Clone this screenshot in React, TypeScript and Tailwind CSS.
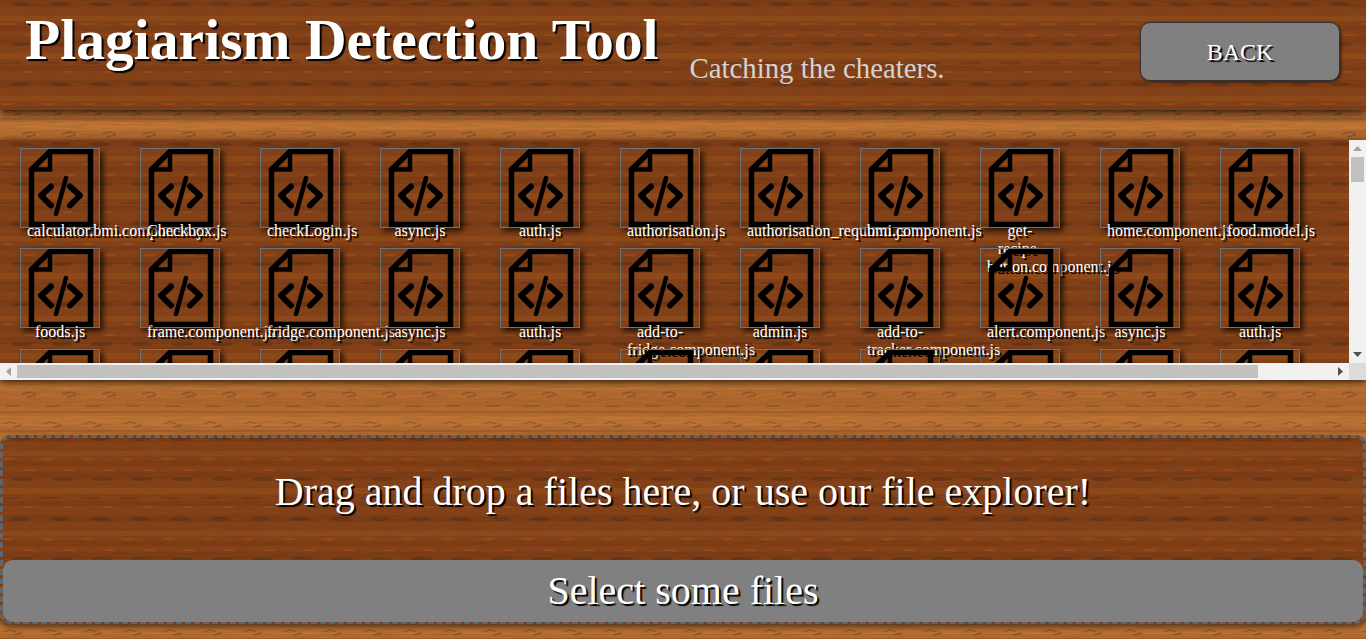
import React from "react";

const rowOne = ["calculator.bmi.component.js","Checkbox.js","checkLogin.js","async.js","auth.js","authorisation.js","authorisation_required.js","bmi.component.js","get-recipe-button.component.js","home.component.js","food.model.js"];
const rowTwo = ["foods.js","frame.component.js","fridge.component.js","async.js","auth.js","add-to-fridge.component.js","admin.js","add-to-tracker.component.js","alert.component.js","async.js","auth.js"];
const rowThree = ["", "", "", "", "", "", "", "", "", "", ""];

function Wood({ id, tone }: { id: string; tone: "dark" | "light" }) {
  const dark = tone === "dark";
  const xs = [0, 40, 80];
  return (
    <svg aria-hidden="true" className="absolute inset-0 h-full w-full">
      <defs>
        {dark ? (
          <pattern id={id} width="120" height="80" patternUnits="userSpaceOnUse">
            <rect width="120" height="80" fill="#833f17" />
            <rect y="0" width="120" height="7" fill="#7a3a15" />
            <rect y="16" width="120" height="5" fill="#8d4718" />
            <rect y="26" width="120" height="5" fill="#7b3a15" />
            <rect y="37" width="120" height="7" fill="#7a3a15" />
            <rect y="53" width="120" height="6" fill="#8f4818" />
            <rect y="66" width="120" height="5" fill="#7b3a15" />
            {xs.map((x) => (
              <g key={x}>
                <ellipse cx={x + 20} cy="4" rx="11" ry="2" fill="#4d2a14" opacity="0.5" />
                <ellipse cx={x + 8} cy="24" rx="7" ry="0.8" fill="#b9591a" opacity="0.55" />
                <ellipse cx={x + 22} cy="44" rx="11" ry="2" fill="#4d2a14" opacity="0.5" />
                <ellipse cx={x + 30} cy="35" rx="6" ry="0.8" fill="#b9591a" opacity="0.55" />
                <ellipse cx={x + 10} cy="63" rx="10" ry="1.3" fill="#5a2d12" opacity="0.45" />
                <ellipse cx={x + 28} cy="72" rx="6" ry="0.8" fill="#b9591a" opacity="0.5" />
              </g>
            ))}
          </pattern>
        ) : (
          <pattern id={id} width="120" height="52" patternUnits="userSpaceOnUse">
            <rect width="120" height="52" fill="#b66b30" />
            <rect y="0" width="120" height="10" fill="#bf7435" />
            <rect y="14" width="120" height="2" fill="#a0602c" />
            <rect y="18" width="120" height="8" fill="#c17636" />
            <rect y="34" width="120" height="9" fill="#b0662d" />
            <rect y="47" width="120" height="2" fill="#a0602c" />
            {xs.map((x) => (
              <g key={x} fill="none" stroke="#7a4a24" strokeWidth="1.3" opacity="0.7">
                <path d={`M${x + 3} 8 l7 -2 l7 2 M${x + 14} 11 l8 -2`} />
                <path d={`M${x + 22} 30 l8 -2 l6 2 M${x + 27} 33 l9 -2`} />
                <path d={`M${x + 6} 42 h14`} />
              </g>
            ))}
          </pattern>
        )}
        <filter id={`${id}-grain`} x="0" y="0" width="100%" height="100%">
          <feTurbulence type="fractalNoise" baseFrequency="0.035 0.5" numOctaves="3" seed="7" />
          <feColorMatrix values="0 0 0 0 0.22  0 0 0 0 0.09  0 0 0 0 0.02  1.8 0 0 0 -0.62" />
        </filter>
      </defs>
      <rect width="100%" height="100%" fill={`url(#${id})`} />
      <rect width="100%" height="100%" filter={`url(#${id}-grain)`} opacity="0.35" />
    </svg>
  );
}

function FileIcon() {
  return (
    <svg
      viewBox="0 0 78 78"
      className="relative block h-20 w-20 border border-[#6a7378] [box-shadow:3px_3px_6px_rgba(0,0,0,0.75)]"
      fill="none"
      stroke="#000"
    >
      <path d="M10.5 75.5 H69.5 V2.5 H29 L10.5 20.5 Z" strokeWidth="5.5" />
      <path d="M29 2.5 V20.5 H10.5" strokeWidth="4.5" />
      <path d="M30 37.5 L20 46.5 L30 56.5 M49 37.5 L59 46.5 L49 56.5" strokeWidth="6" strokeLinecap="round" strokeLinejoin="round" />
      <path d="M45 29 L35 65" strokeWidth="4.5" strokeLinecap="round" />
    </svg>
  );
}

function FileItem({ name }: { name: string }) {
  return (
    <div className="h-[100.5px] w-[120px] shrink-0 px-5">
      <FileIcon />
      <div className="relative mx-[7px] -mt-[5.9px] w-[66px] text-center text-[16px] leading-[18px] text-white [text-shadow:2px_2px_0_#000]">
        {name}
      </div>
    </div>
  );
}

function Arrow({ dir, dim }: { dir: "up" | "down" | "left" | "right"; dim?: boolean }) {
  const d = { up: "M4.5 2 L9 7 H0 Z", down: "M0 2 H9 L4.5 7 Z", left: "M7 0 V9 L2 4.5 Z", right: "M2 0 L7 4.5 L2 9 Z" }[dir];
  return (
    <svg viewBox="0 0 9 9" className="h-[9px] w-[9px]" fill={dim ? "#a3a3a3" : "#505050"}>
      <path d={d} />
    </svg>
  );
}

export default function App() {
  return (
    <div className="relative h-[639px] w-[1366px] overflow-hidden font-['Liberation_Serif',serif]">
      <Wood id="page-wood" tone="light" />

      <header className="relative flex h-[110px] items-start [box-shadow:0_3px_9px_rgba(0,0,0,0.8)]">
        <Wood id="header-wood" tone="dark" />
        <h1 className="relative ml-[25px] mt-[7px] whitespace-nowrap text-[57.6px] font-bold leading-[66px] text-white [text-shadow:2px_2px_1px_#000]">
          Plagiarism Detection Tool
        </h1>
        <p className="relative ml-[31px] mt-[52px] whitespace-nowrap text-[28.8px] leading-[33px] text-[#d3d3d3]">
          Catching the cheaters.
        </p>
        <button className="relative ml-auto mr-[26px] mt-[22px] h-[59px] w-[200px] rounded-[10px] border border-[#333] bg-[#808080] text-[24px] text-white [box-shadow:1px_1px_3px_rgba(0,0,0,0.6)] [text-shadow:2px_2px_1px_#000]">
          BACK
        </button>
      </header>

      <section className="relative mt-[30px] flex h-[240px] flex-col [box-shadow:0_2px_8px_rgba(0,0,0,0.75)]">
        <div className="flex h-[223px]">
          <div className="relative h-[223px] w-[1349px] overflow-hidden">
            <Wood id="files-wood" tone="dark" />
            <div className="relative flex w-[1320px] flex-wrap pt-[7.9px]">
              {[...rowOne, ...rowTwo, ...rowThree].map((name, i) => (
                <FileItem key={i} name={name} />
              ))}
            </div>
          </div>
          <div className="flex w-[17px] flex-col items-center bg-[#f1f1f1]">
            <div className="flex h-[17px] items-center justify-center"><Arrow dir="up" dim /></div>
            <div className="h-[25px] w-[13px] bg-[#c1c1c1]" />
            <div className="flex-1" />
            <div className="flex h-[17px] items-center justify-center"><Arrow dir="down" /></div>
          </div>
        </div>
        <div className="flex h-[17px]">
          <div className="flex w-[1349px] items-center bg-[#f1f1f1]">
            <div className="flex w-[17px] items-center justify-center"><Arrow dir="left" dim /></div>
            <div className="h-[13px] w-[1241px] bg-[#c1c1c1]" />
            <div className="flex-1" />
            <div className="flex w-[17px] items-center justify-center"><Arrow dir="right" /></div>
          </div>
          <div className="w-[17px] bg-[#dcdcdc]" />
        </div>
      </section>

      <section className="relative mt-[55px] flex h-[189px] flex-col overflow-hidden rounded-[10px] px-[3px] pb-[2px] pt-[3px] [box-shadow:0_3px_6px_rgba(0,0,0,0.55)]">
        <Wood id="drop-wood" tone="dark" />
        <div className="absolute inset-0 rounded-[10px] border-[3px] border-dashed border-[#5f666b]" />
        <p className="relative mt-[31px] text-center text-[40px] leading-[46px] text-white [text-shadow:2px_2px_1px_#000]">
          Drag and drop a files here, or use our file explorer!
        </p>
        <button className="relative mt-auto h-[62px] w-full rounded-[10px] bg-[#808080] text-[40px] leading-[46px] text-white [text-shadow:2px_2px_1px_#000]">
          Select some files
        </button>
      </section>
    </div>
  );
}
